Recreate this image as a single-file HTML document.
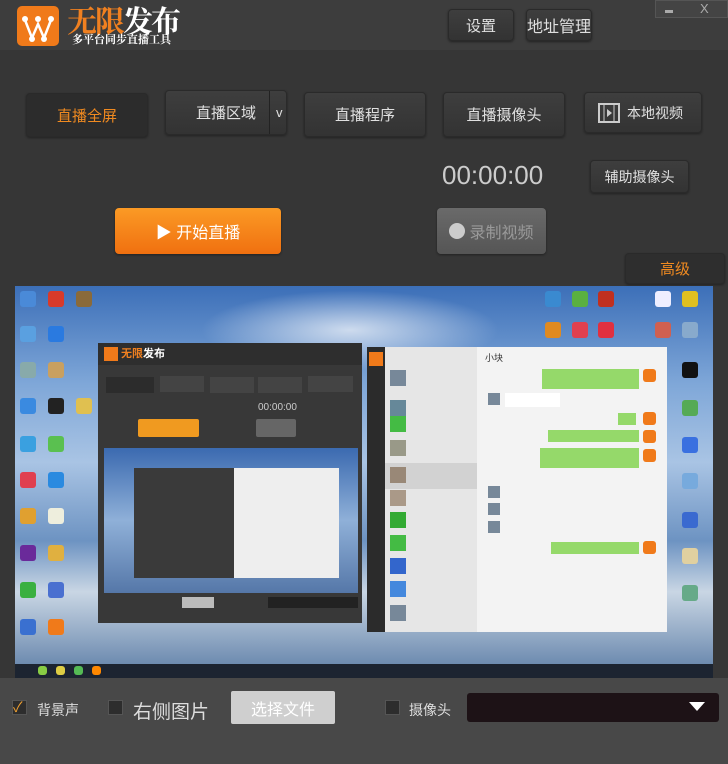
<!DOCTYPE html>
<html><head><meta charset="utf-8"><style>
*{margin:0;padding:0;box-sizing:border-box}
body{width:728px;height:764px;background:#363636;font-family:"Liberation Sans","Noto Sans CJK SC",sans-serif;position:relative;overflow:hidden;color:#ddd}
.a{position:absolute}
.hdr{left:0;top:0;width:728px;height:50px;background:#3d3d3d}
.btn{position:absolute;border:1px solid #2a2a2a;border-radius:4px;background:linear-gradient(#3e3e3e,#333);color:#e0e0e0;font-size:15px;display:flex;align-items:center;justify-content:center;box-shadow:0 1px 2px #222}
.cb{position:absolute;width:15px;height:15px;border:1px solid #555;background:#2d2d2d}
.ic{position:absolute;width:16px;height:16px;border-radius:3px}
.av{position:absolute;width:16px;height:16px;background:#789}
</style></head><body>
<div class="a hdr"></div>
<div class="a" style="left:17px;top:6px;width:42px;height:40px;background:#f07a1a;border-radius:5px"></div>
<svg class="a" style="left:17px;top:6px" width="42" height="40"><path d="M8 14 L15 32 L21 18 L27 32 L34 14" stroke="#fff" stroke-width="2.5" fill="none"/><circle cx="8" cy="13" r="3" fill="#fff"/><circle cx="21" cy="13" r="3" fill="#fff"/><circle cx="34" cy="13" r="3" fill="#fff"/><circle cx="15" cy="33" r="3" fill="#fff"/><circle cx="27" cy="33" r="3" fill="#fff"/></svg>
<div class="a" style="left:67px;top:0px;font-size:30px;font-weight:bold;color:#f08020;font-family:'Noto Serif CJK SC',serif;letter-spacing:-2px;line-height:38px">无限<span style="color:#fff">发布</span></div>
<div class="a" style="left:72px;top:33px;font-size:11px;font-weight:bold;color:#fff;font-family:'Noto Serif CJK SC',serif;line-height:13px">多平台同步直播工具</div>
<div class="btn" style="left:448px;top:9px;width:66px;height:32px">设置</div>
<div class="btn" style="left:526px;top:9px;width:66px;height:32px;font-size:16px">地址管理</div>
<div class="a" style="left:655px;top:0;width:73px;height:18px;background:#444;border:1px solid #555"></div>
<div class="a" style="left:665px;top:10px;width:8px;height:3px;background:#aaa"></div>
<div class="a" style="left:700px;top:1px;font-size:13px;color:#aaa">X</div>
<div class="btn" style="left:26px;top:93px;width:122px;height:44px;background:#2c2c2c;color:#f08a20">直播全屏</div>
<div class="btn" style="left:165px;top:90px;width:122px;height:45px;justify-content:flex-start;padding-left:30px">直播区域<span style="position:absolute;left:103px;top:0;bottom:0;border-left:1px solid #222;padding-left:6px;display:flex;align-items:center;font-size:13px">v</span></div>
<div class="btn" style="left:304px;top:92px;width:122px;height:45px">直播程序</div>
<div class="btn" style="left:443px;top:92px;width:122px;height:45px">直播摄像头</div>
<div class="btn" style="left:584px;top:92px;width:118px;height:41px;justify-content:flex-start;padding-left:42px;font-size:14px">本地视频</div>
<svg class="a" style="left:598px;top:103px" width="22" height="20"><rect x="1" y="1" width="20" height="18" fill="none" stroke="#ccc" stroke-width="2"/><rect x="6" y="1" width="10" height="18" fill="none" stroke="#ccc"/><path d="M9 6 L14 10 L9 14Z" fill="#ccc"/></svg>
<div class="a" style="left:442px;top:160px;font-size:26px;color:#ccc">00:00:00</div>
<div class="btn" style="left:590px;top:160px;width:99px;height:33px;font-size:14px">辅助摄像头</div>
<div class="btn" style="left:115px;top:208px;width:166px;height:46px;background:linear-gradient(#fb9a25,#f07010);border:none;color:#fff;font-size:16px">▶ 开始直播</div>
<div class="btn" style="left:437px;top:208px;width:109px;height:46px;background:linear-gradient(#6a6a6a,#555);border:none;color:#999;font-size:16px"><span style="width:16px;height:16px;border-radius:8px;background:#ccc;margin-right:4px"></span>录制视频</div>
<div class="btn" style="left:625px;top:253px;width:100px;height:31px;background:#2e2e2e;color:#f08a20;font-size:15px">高级</div>
<!-- preview -->
<div class="a" style="left:15px;top:286px;width:698px;height:392px;background:linear-gradient(180deg,#3c6fb8 0%,#7fa7d8 25%,#a9c4e4 45%,#6d93c2 65%,#c9d6e4 78%,#5c7da6 100%)"></div>
<div class="a" style="left:200px;top:290px;width:300px;height:80px;background:radial-gradient(ellipse,rgba(255,255,255,.7),rgba(255,255,255,0) 70%)"></div>
<!-- desktop icons left -->
<div class="ic" style="left:20px;top:291px;background:#4a8ad8"></div><div class="ic" style="left:48px;top:291px;background:#d83a2a"></div><div class="ic" style="left:76px;top:291px;background:#8a6a3a"></div>
<div class="ic" style="left:20px;top:326px;background:#5aa0e0"></div><div class="ic" style="left:48px;top:326px;background:#2a7ae0"></div>
<div class="ic" style="left:20px;top:362px;background:#8aa"></div><div class="ic" style="left:48px;top:362px;background:#c9a060"></div>
<div class="ic" style="left:20px;top:398px;background:#3a8ae0"></div><div class="ic" style="left:48px;top:398px;background:#222"></div><div class="ic" style="left:76px;top:398px;background:#e0c050"></div>
<div class="ic" style="left:20px;top:436px;background:#3aa0e0"></div><div class="ic" style="left:48px;top:436px;background:#5ac050"></div>
<div class="ic" style="left:20px;top:472px;background:#e04050"></div><div class="ic" style="left:48px;top:472px;background:#2a8ae0"></div>
<div class="ic" style="left:20px;top:508px;background:#e0a030"></div><div class="ic" style="left:48px;top:508px;background:#eed"></div>
<div class="ic" style="left:20px;top:545px;background:#6a2a9a"></div><div class="ic" style="left:48px;top:545px;background:#e0b040"></div>
<div class="ic" style="left:20px;top:582px;background:#3ab040"></div><div class="ic" style="left:48px;top:582px;background:#4a70d0"></div>
<div class="ic" style="left:20px;top:619px;background:#3a70d0"></div><div class="ic" style="left:48px;top:619px;background:#f07a1a"></div>
<!-- right icons -->
<div class="ic" style="left:545px;top:291px;background:#3a8ad0"></div><div class="ic" style="left:572px;top:291px;background:#5ab040"></div><div class="ic" style="left:598px;top:291px;background:#c03020"></div><div class="ic" style="left:655px;top:291px;background:#eef"></div><div class="ic" style="left:682px;top:291px;background:#e0c020"></div>
<div class="ic" style="left:545px;top:322px;background:#e08a20"></div><div class="ic" style="left:572px;top:322px;background:#e04050"></div><div class="ic" style="left:598px;top:322px;background:#e03040"></div><div class="ic" style="left:655px;top:322px;background:#d06050"></div><div class="ic" style="left:682px;top:322px;background:#8ac"></div>
<div class="ic" style="left:682px;top:362px;background:#111"></div><div class="ic" style="left:682px;top:400px;background:#5a5"></div><div class="ic" style="left:682px;top:437px;background:#3a70e0"></div><div class="ic" style="left:682px;top:473px;background:#7ad"></div><div class="ic" style="left:682px;top:512px;background:#3a6ad0"></div><div class="ic" style="left:682px;top:548px;background:#e0d0a0"></div><div class="ic" style="left:682px;top:585px;background:#6a8"></div>
<div class="a" style="left:15px;top:664px;width:698px;height:14px;background:#1c2431"></div>
<div class="ic" style="left:38px;top:666px;width:9px;height:9px;background:#8c4"></div><div class="ic" style="left:56px;top:666px;width:9px;height:9px;background:#dc4"></div><div class="ic" style="left:74px;top:666px;width:9px;height:9px;background:#5b5"></div><div class="ic" style="left:92px;top:666px;width:9px;height:9px;background:#f80"></div>
<!-- inner app -->
<div class="a" style="left:98px;top:343px;width:264px;height:280px;background:#383838"></div>
<div class="a" style="left:98px;top:343px;width:264px;height:22px;background:#2e2e2e"></div>
<div class="a" style="left:104px;top:347px;width:14px;height:14px;background:#f07a1a"></div>
<div class="a" style="left:121px;top:345px;font-size:11px;color:#f08020;font-weight:bold">无限<span style="color:#fff">发布</span></div>
<div class="a" style="left:106px;top:377px;width:48px;height:16px;background:#2c2c2c"></div>
<div class="a" style="left:160px;top:376px;width:44px;height:16px;background:#444"></div>
<div class="a" style="left:210px;top:377px;width:44px;height:16px;background:#444"></div>
<div class="a" style="left:258px;top:377px;width:44px;height:16px;background:#444"></div>
<div class="a" style="left:308px;top:376px;width:45px;height:16px;background:#444"></div>
<div class="a" style="left:258px;top:402px;font-size:10px;color:#ccc">00:00:00</div>
<div class="a" style="left:138px;top:419px;width:61px;height:18px;background:#f09a20;border-radius:2px"></div>
<div class="a" style="left:256px;top:419px;width:40px;height:18px;background:#666;border-radius:2px"></div>
<div class="a" style="left:104px;top:448px;width:254px;height:145px;background:linear-gradient(#3b6ab0,#8fb0d8 50%,#5577a8)"></div>
<div class="a" style="left:134px;top:468px;width:100px;height:110px;background:#3a3a3a"></div>
<div class="a" style="left:234px;top:468px;width:105px;height:110px;background:#eee"></div>
<div class="a" style="left:182px;top:597px;width:32px;height:11px;background:#bbb"></div>
<div class="a" style="left:268px;top:597px;width:90px;height:11px;background:#222"></div>
<!-- chat -->
<div class="a" style="left:367px;top:347px;width:18px;height:285px;background:#2b2b2b"></div>
<div class="a" style="left:369px;top:352px;width:14px;height:14px;background:#f07a1a"></div>
<div class="a" style="left:385px;top:347px;width:92px;height:285px;background:#e6e6e6"></div>
<div class="a" style="left:385px;top:463px;width:92px;height:26px;background:#d2d2d2"></div>
<div class="av" style="left:390px;top:370px"></div><div class="av" style="left:390px;top:400px;background:#689"></div><div class="av" style="left:390px;top:416px;background:#4b4"></div><div class="av" style="left:390px;top:440px;background:#998"></div><div class="av" style="left:390px;top:467px;background:#987"></div><div class="av" style="left:390px;top:490px;background:#a98"></div><div class="av" style="left:390px;top:512px;background:#3a3"></div><div class="av" style="left:390px;top:535px;background:#4b4"></div><div class="av" style="left:390px;top:558px;background:#36c"></div><div class="av" style="left:390px;top:581px;background:#48d"></div><div class="av" style="left:390px;top:605px;background:#789"></div>
<div class="a" style="left:477px;top:347px;width:190px;height:285px;background:#f3f3f3"></div>
<div class="a" style="left:485px;top:351px;font-size:9px;color:#333">小块</div>
<div class="a" style="left:542px;top:369px;width:97px;height:20px;background:#95d96a"></div>
<div class="a" style="left:505px;top:393px;width:55px;height:14px;background:#fff"></div>
<div class="a" style="left:548px;top:430px;width:91px;height:12px;background:#95d96a"></div>
<div class="a" style="left:540px;top:448px;width:99px;height:20px;background:#95d96a"></div>
<div class="a" style="left:551px;top:542px;width:88px;height:12px;background:#95d96a"></div>
<div class="a" style="left:618px;top:413px;width:18px;height:12px;background:#95d96a"></div>
<div class="ic" style="left:643px;top:369px;width:13px;height:13px;background:#f07a1a"></div><div class="ic" style="left:643px;top:412px;width:13px;height:13px;background:#f07a1a"></div><div class="ic" style="left:643px;top:430px;width:13px;height:13px;background:#f07a1a"></div><div class="ic" style="left:643px;top:449px;width:13px;height:13px;background:#f07a1a"></div><div class="ic" style="left:643px;top:541px;width:13px;height:13px;background:#f07a1a"></div>
<div class="av" style="left:488px;top:393px;width:12px;height:12px"></div><div class="av" style="left:488px;top:486px;width:12px;height:12px"></div><div class="av" style="left:488px;top:503px;width:12px;height:12px"></div><div class="av" style="left:488px;top:521px;width:12px;height:12px"></div>
<!-- bottom -->
<div class="a" style="left:0;top:678px;width:728px;height:86px;background:#484848"></div>
<div class="cb" style="left:12px;top:700px"></div><div class="a" style="left:13px;top:697px;color:#f0a030;font-size:14px">✓</div>
<div class="a" style="left:37px;top:700px;font-size:14px;color:#ddd">背景声</div>
<div class="cb" style="left:108px;top:700px"></div>
<div class="a" style="left:133px;top:697px;font-size:19px;color:#ddd">右侧图片</div>
<div class="a" style="left:231px;top:691px;width:104px;height:33px;background:#cfcfcf;border-radius:2px;color:#fff;font-size:16px;display:flex;align-items:center;justify-content:center">选择文件</div>
<div class="cb" style="left:385px;top:700px"></div>
<div class="a" style="left:409px;top:700px;font-size:14px;color:#ddd">摄像头</div>
<div class="a" style="left:467px;top:693px;width:252px;height:29px;background:#1d1216;border-radius:3px"></div>
<div class="a" style="left:689px;top:702px;width:0;height:0;border-left:8px solid transparent;border-right:8px solid transparent;border-top:9px solid #fff"></div>
</body></html>
